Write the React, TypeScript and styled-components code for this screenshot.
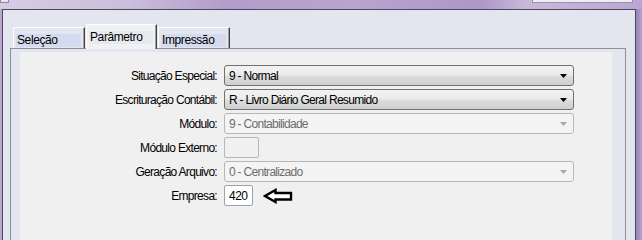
import styled, { createGlobalStyle } from "styled-components";

const GlobalStyle = createGlobalStyle`
  html, body {
    margin: 0;
    padding: 0;
    background: #b8a6cf;
  }
`;

const narrow = `"Liberation Sans", Arial, sans-serif`;

type Field = {
  label: string;
  kind: "combo" | "box";
  value?: string;
  disabled?: boolean;
  width?: number;
  pointer?: boolean;
};

const fields: Field[] = [
  { label: "Situação Especial:", kind: "combo", value: "9 - Normal" },
  {
    label: "Escrituração Contábil:",
    kind: "combo",
    value: "R - Livro Diário Geral Resumido",
  },
  { label: "Módulo:", kind: "combo", value: "9 - Contabilidade", disabled: true },
  { label: "Módulo Externo:", kind: "box", disabled: true, width: 35 },
  {
    label: "Geração Arquivo:",
    kind: "combo",
    value: "0 - Centralizado",
    disabled: true,
  },
  { label: "Empresa:", kind: "box", value: "420", width: 29, pointer: true },
];

const tabs = ["Seleção", "Parâmetro", "Impressão"];

export default function App() {
  return (
    <>
      <GlobalStyle />
      <Screen>
        <TopStrip>
          <CornerBox />
          <Spacer />
          <CaptionBox />
        </TopStrip>
        <Client>
          <TabControl>
            <TabStrip>
              {tabs.map((t) => (
                <Tab key={t} selected={t === "Parâmetro"}>
                  <TabLabel selected={t === "Parâmetro"}>{t}</TabLabel>
                </Tab>
              ))}
            </TabStrip>
            <TabPage>
              <Form>
                {fields.map((f) => (
                  <Row key={f.label}>
                    <Label>{f.label}</Label>
                    <ControlCell>
                      {f.kind === "combo" ? (
                        <Combo disabled={!!f.disabled}>
                          <ComboText>{f.value}</ComboText>
                          <DropArrow
                            width="7"
                            height="4"
                            viewBox="0 0 7 4"
                            disabled={!!f.disabled}
                          >
                            <path d="M0 0h7L3.5 4z" />
                          </DropArrow>
                        </Combo>
                      ) : (
                        <TextBox disabled={!!f.disabled} w={f.width ?? 30}>
                          {f.value}
                        </TextBox>
                      )}
                      {f.pointer && (
                        <svg width="31" height="16" viewBox="0 0 31 16">
                          <polygon
                            points="2,8 12.5,2 12.5,5 28,5 28,11.5 12.5,11.5 12.5,14"
                            fill="#fff"
                            stroke="#000"
                            strokeWidth="2.4"
                            strokeLinejoin="miter"
                          />
                        </svg>
                      )}
                    </ControlCell>
                  </Row>
                ))}
              </Form>
            </TabPage>
          </TabControl>
        </Client>
      </Screen>
    </>
  );
}

const Screen = styled.div`
  width: 642px;
  min-height: 100vh;
  display: flex;
  flex-direction: column;
  background: linear-gradient(
    90deg,
    #b9a6d1 0%,
    #b9a6d1 98.6%,
    #9a86ba 99.2%,
    #b7a4cf 100%
  );
`;

const TopStrip = styled.div`
  height: 9px;
  flex-shrink: 0;
  display: flex;
  align-items: flex-start;
  background: linear-gradient(
    90deg,
    #d6cce3 0%,
    #cbbedb 20%,
    #b29dca 35%,
    #b8a4cf 55%,
    #ad97c7 75%,
    #c8b9da 82%,
    #b9a6d1 100%
  );
`;

const CornerBox = styled.div`
  width: 7px;
  height: 2px;
  border: 1px solid #8d82a0;
  border-top: none;
  background: #e8e4ee;
`;

const Spacer = styled.div`
  flex: 1;
`;

const CaptionBox = styled.div`
  width: 99px;
  height: 2px;
  margin-right: 9px;
  border: 1px solid #9b8fb3;
  border-top: none;
  background: #efedf4;
`;

const Client = styled.div`
  flex: 1;
  margin: 0 6px 0 2px;
  border: 1px solid #4b4a5c;
  border-bottom: none;
  background: #e3e6ee;
  display: flex;
  flex-direction: column;
`;

const TabControl = styled.div`
  margin: 14px 0 0 7px;
  width: 616px;
  flex: 1;
  display: flex;
  flex-direction: column;
`;

const TabStrip = styled.div`
  height: 24px;
  display: flex;
  align-items: flex-end;
  padding-left: 3px;
  position: relative;
  z-index: 1;
`;

const Tab = styled.div<{ selected: boolean }>`
  box-sizing: border-box;
  display: flex;
  align-items: flex-end;
  width: ${({ selected }) => (selected ? "71px" : "72px")};
  height: ${({ selected }) => (selected ? "25px" : "21px")};
  margin-bottom: ${({ selected }) => (selected ? "-1px" : "0")};
  margin-left: ${({ selected }) => (selected ? "1px" : "0")};
  margin-right: ${({ selected }) => (selected ? "1px" : "0")};
  padding: ${({ selected }) => (selected ? "0 3px 5px 2px" : "0 3px 1px 2px")};
  border-top: 1px solid #ffffff;
  border-left: 1px solid #ffffff;
  border-right: 1px solid #404040;
  box-shadow: inset -1px 0 0 #a0a0a0;
  background: ${({ selected }) => (selected ? "#eff1f5" : "#e3e6ee")};
`;

const TabLabel = styled.div<{ selected: boolean }>`
  flex: 1;
  height: 13px;
  line-height: 13px;
  padding-left: 1px;
  font-family: "Liberation Sans", Arial, sans-serif;
  font-size: 12px;
  letter-spacing: -0.4px;
  color: #000;
  white-space: nowrap;
  background: ${({ selected }) => (selected ? "#e7e9ef" : "#d4dbee")};
`;

const TabPage = styled.div`
  flex: 1;
  display: flex;
  padding: 3px 13px 0 9px;
  border: 1px solid #8d9099;
  border-bottom: none;
  background: #e3e6ee;
`;

const Form = styled.div`
  flex: 1;
  background: #f0f0f0;
  padding-top: 13px;
  display: flex;
  flex-direction: column;
  gap: 3px;
`;

const Row = styled.div`
  display: grid;
  grid-template-columns: 197px auto;
  column-gap: 7px;
  align-items: center;
  height: 21px;
`;

const Label = styled.div`
  text-align: right;
  font-family: ${narrow};
  font-size: 12px;
  letter-spacing: -0.7px;
  color: #000;
  white-space: nowrap;
`;

const ControlCell = styled.div`
  display: flex;
  align-items: center;
  gap: 10px;
`;

const Combo = styled.div<{ disabled: boolean }>`
  box-sizing: border-box;
  width: 350px;
  height: 21px;
  display: flex;
  align-items: center;
  padding: 0 4px 0 4px;
  border-radius: 3px;
  border: 1px solid ${({ disabled }) => (disabled ? "#b4b8bc" : "#707070")};
  background: ${({ disabled }) =>
    disabled
      ? "#f4f4f4"
      : "linear-gradient(180deg, #f2f2f2 0%, #ebebeb 48%, #dddddd 52%, #cfcfcf 100%)"};
  color: ${({ disabled }) => (disabled ? "#6d6d6d" : "#000")};
`;

const ComboText = styled.span`
  flex: 1;
  font-family: ${narrow};
  font-size: 12px;
  letter-spacing: -0.7px;
  white-space: nowrap;
`;

const DropArrow = styled.svg<{ disabled: boolean }>`
  margin-right: 2px;
  fill: ${({ disabled }) => (disabled ? "#a7a7a7" : "#000")};
`;

const TextBox = styled.div<{ disabled: boolean; w: number }>`
  box-sizing: border-box;
  width: ${({ w }) => w}px;
  height: 21px;
  padding-left: 4px;
  display: flex;
  align-items: center;
  border-radius: 2px;
  border: 1px solid ${({ disabled }) => (disabled ? "#b4b8bc" : "#9da3ab")};
  background: ${({ disabled }) => (disabled ? "#f0f0f0" : "#ffffff")};
  font-family: ${narrow};
  font-size: 12px;
  letter-spacing: -0.5px;
  color: #000;
`;
